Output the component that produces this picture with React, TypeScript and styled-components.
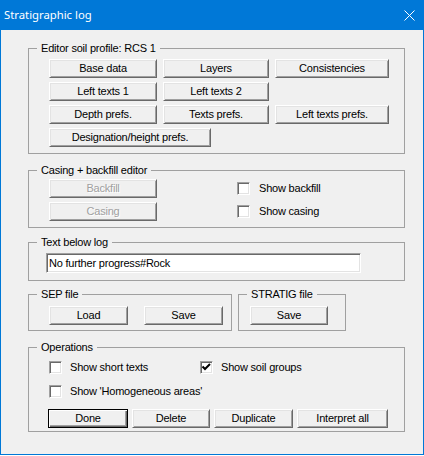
import React from "react";
import styled, { createGlobalStyle } from "styled-components";

const Global = createGlobalStyle`
  html, body {
    margin: 0;
    padding: 0;
    background: #ffffff;
  }
`;

const Win = styled.div`
  width: 424px;
  height: 455px;
  box-sizing: border-box;
  border: 1px solid #0078d7;
  border-top: none;
  background: #f0f0f0;
  font-family: "Liberation Sans", Arial, sans-serif;
  font-size: 11px;
  letter-spacing: -0.2px;
  color: #000;
  display: flex;
  flex-direction: column;
`;

const TitleBar = styled.div`
  height: 30px;
  flex: none;
  background: #0078d7;
  display: flex;
  align-items: center;
  justify-content: space-between;
  padding: 0 9px 0 4px;
  margin: 0 -1px;
  box-sizing: border-box;
`;

const Title = styled.span`
  font-family: "Noto Sans", "Open Sans", sans-serif;
  font-size: 11.3px;
  letter-spacing: 0;
  color: #ffffff;
  margin-top: -1px;
`;

const Body = styled.div`
  padding: 0 18px 0 27px;
  display: flex;
  flex-direction: column;
`;

const Group = styled.fieldset<{ $top: number; $w?: number }>`
  margin: ${(p) => p.$top}px 0 0 0;
  padding: 0;
  border: 1px solid #a0a0a0;
  min-width: 0;
  width: ${(p) => (p.$w ? `${p.$w}px` : "auto")};
  box-sizing: border-box;
`;

const Legend = styled.legend`
  margin-left: 8px;
  padding: 0 4px;
  line-height: 13px;
  font-size: 11px;
`;

const Content = styled.div<{ $pad: string }>`
  padding: ${(p) => p.$pad};
`;

const ButtonGrid = styled.div`
  display: grid;
  grid-template-columns: 108px 106px 114px;
  column-gap: 6px;
  row-gap: 4px;
`;

const Btn = styled.button<{ $w?: number; $def?: boolean }>`
  width: ${(p) => (p.$w ? `${p.$w}px` : "100%")};
  height: 19px;
  box-sizing: border-box;
  margin: 0;
  padding: 0;
  background: #f0f0f0;
  font-family: inherit;
  font-size: 11px;
  letter-spacing: -0.2px;
  line-height: 13px;
  color: ${(p) => (p.disabled ? "#a0a0a0" : "#000")};
  text-shadow: ${(p) => (p.disabled ? "1px 1px 0 #ffffff" : "none")};
  border: 1px solid;
  border-color: ${(p) =>
    p.$def ? "#000 #000 #000 #000" : "#ffffff #696969 #696969 #ffffff"};
  box-shadow: ${(p) =>
    p.$def
      ? "inset 1px 1px 0 #ffffff, inset -1px -1px 0 #696969, inset -2px -2px 0 #a0a0a0"
      : "inset 1px 1px 0 #e3e3e3, inset -1px -1px 0 #a0a0a0"};
  display: flex;
  align-items: center;
  justify-content: center;
  justify-self: start;
  white-space: nowrap;
  cursor: default;
`;

const Wide = styled.div`
  grid-column: 1 / span 3;
`;

const TwoCol = styled.div<{ $cols: string; $rowGap: number; $indent?: number }>`
  display: grid;
  grid-template-columns: ${(p) => p.$cols};
  row-gap: ${(p) => p.$rowGap}px;
  align-items: center;
  margin-left: ${(p) => p.$indent ?? 0}px;
`;

const Check = styled.label<{ $gap: number }>`
  display: flex;
  align-items: center;
  gap: ${(p) => p.$gap}px;
  height: 15px;
  line-height: 13px;
  white-space: nowrap;
`;

const Box = styled.span`
  width: 13px;
  height: 13px;
  box-sizing: border-box;
  background: #ffffff;
  border: 1px solid;
  border-color: #a0a0a0 #ffffff #ffffff #a0a0a0;
  box-shadow: inset 1px 1px 0 #696969, inset -1px -1px 0 #e3e3e3;
  display: flex;
  flex: none;
`;

const TextInput = styled.div`
  width: 315px;
  height: 20px;
  box-sizing: border-box;
  background: #ffffff;
  border: 1px solid;
  border-color: #a0a0a0 #ffffff #ffffff #a0a0a0;
  box-shadow: inset 1px 1px 0 #696969, inset -1px -1px 0 #e3e3e3;
  padding: 0 2px;
  line-height: 18px;
  font-size: 11px;
`;

const FileRow = styled.div`
  display: flex;
  gap: 6px;
  margin-top: 7px;
`;

const BtnRow = styled.div<{ $gap: number; $top?: number }>`
  display: flex;
  gap: ${(p) => p.$gap}px;
  margin-top: ${(p) => p.$top ?? 0}px;
`;

const CheckBox = ({ label, checked, gap }: { label: string; checked?: boolean; gap: number }) => (
  <Check $gap={gap}>
    <Box>
      {checked && (
        <svg width="11" height="11" viewBox="0 0 11 11">
          <path d="M1.5 4.5 L4 7 L9 2" stroke="#000" strokeWidth="2" fill="none" />
        </svg>
      )}
    </Box>
    <span>{label}</span>
  </Check>
);

export default function App() {
  return (
    <>
      <Global />
      <Win>
        <TitleBar>
          <Title>Stratigraphic log</Title>
          <svg width="11" height="11" viewBox="0 0 11 11">
            <path d="M0.5 0.5 L10.5 10.5 M10.5 0.5 L0.5 10.5" stroke="#fff" strokeWidth="1" />
          </svg>
        </TitleBar>
        <Body>
          <Group $top={12}>
            <Legend>Editor soil profile: RCS 1</Legend>
            <Content $pad="4px 0 6px 20px">
              <ButtonGrid>
                <Btn>Base data</Btn>
                <Btn>Layers</Btn>
                <Btn>Consistencies</Btn>
                <Btn>Left texts 1</Btn>
                <Btn>Left texts 2</Btn>
                <span />
                <Btn>Depth prefs.</Btn>
                <Btn>Texts prefs.</Btn>
                <Btn>Left texts prefs.</Btn>
                <Wide>
                  <Btn $w={162}>Designation/height prefs.</Btn>
                </Wide>
              </ButtonGrid>
            </Content>
          </Group>

          <Group $top={10}>
            <Legend>Casing + backfill editor</Legend>
            <Content $pad="2px 0 6px 20px">
              <TwoCol $cols="188px auto" $rowGap={4}>
                <Btn $w={108} disabled>Backfill</Btn>
                <CheckBox label="Show backfill" gap={9} />
                <Btn $w={108} disabled>Casing</Btn>
                <CheckBox label="Show casing" gap={9} />
              </TwoCol>
            </Content>
          </Group>

          <Group $top={8}>
            <Legend>Text below log</Legend>
            <Content $pad="4px 0 7px 17px">
              <TextInput>No further progress#Rock</TextInput>
            </Content>
          </Group>

          <FileRow>
            <Group $top={0} $w={204}>
              <Legend>SEP file</Legend>
              <Content $pad="5px 0 5px 20px">
                <BtnRow $gap={16}>
                  <Btn $w={79}>Load</Btn>
                  <Btn $w={79}>Save</Btn>
                </BtnRow>
              </Content>
            </Group>
            <Group $top={0} $w={108}>
              <Legend>STRATIG file</Legend>
              <Content $pad="5px 0 5px 11px">
                <Btn $w={78}>Save</Btn>
              </Content>
            </Group>
          </FileRow>

          <Group $top={10}>
            <Legend>Operations</Legend>
            <Content $pad="6px 0 3px 19px">
              <TwoCol $cols="151px auto" $rowGap={9} $indent={1}>
                <CheckBox label="Show short texts" gap={8} />
                <CheckBox label="Show soil groups" gap={8} checked />
                <CheckBox label="Show 'Homogeneous areas'" gap={8} />
              </TwoCol>
              <BtnRow $gap={4} $top={10}>
                <Btn $w={80} $def>Done</Btn>
                <Btn $w={78}>Delete</Btn>
                <Btn $w={79}>Duplicate</Btn>
                <Btn $w={91}>Interpret all</Btn>
              </BtnRow>
            </Content>
          </Group>
        </Body>
      </Win>
    </>
  );
}
